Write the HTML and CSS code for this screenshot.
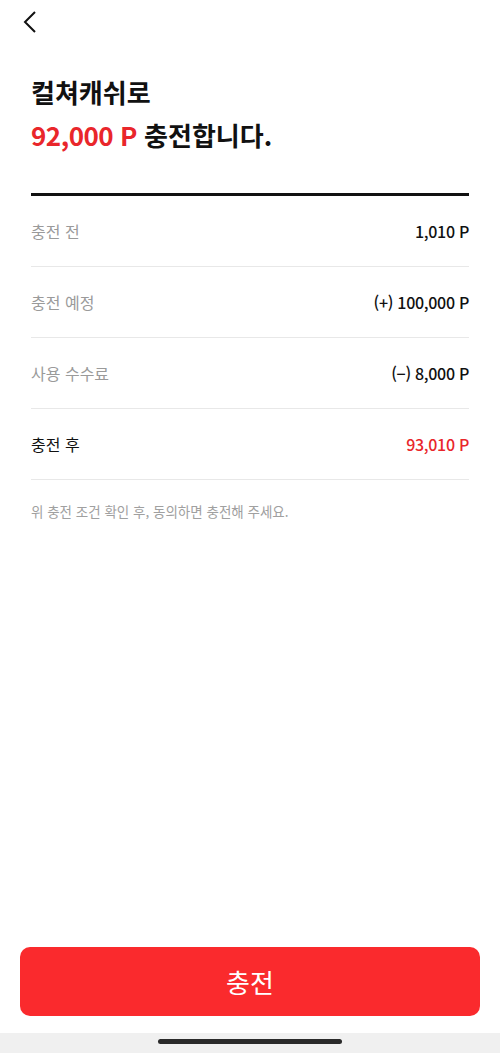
FILE: index.html
```html
<!DOCTYPE html>
<html lang="ko">
<head>
  <meta charset="UTF-8" />
  <title>컬쳐캐쉬 충전</title>
  <link rel="stylesheet" href="styles.css">
</head>
<body>
  <div class="screen">
    <header class="topbar">
      <button class="back" aria-label="뒤로">
        <svg width="16" height="24" viewBox="0 0 16 24">
          <path d="M13 2 L3 12 L13 22" fill="none" stroke="#111" stroke-width="2" />
        </svg>
      </button>
    </header>

    <main class="content">
      <h1 class="title">
        컬쳐캐쉬로<br>
        <span class="point">92,000 P</span> 충전합니다.
      </h1>

      <ul class="summary">
        <li>
          <span class="label">충전 전</span>
          <span class="value">1,010 P</span>
        </li>
        <li>
          <span class="label">충전 예정</span>
          <span class="value">(+) 100,000 P</span>
        </li>
        <li>
          <span class="label">사용 수수료</span>
          <span class="value">(−) 8,000 P</span>
        </li>
        <li class="result">
          <span class="label">충전 후</span>
          <span class="value">93,010 P</span>
        </li>
      </ul>

      <p class="note">위 충전 조건 확인 후, 동의하면 충전해 주세요.</p>
    </main>

    <div class="actions">
      <button class="charge">충전</button>
    </div>

    <div class="home-bar"><span></span></div>
  </div>
</body>
</html>
```

FILE: styles.css
```css
body {
  margin: 0;
  padding: 0;
  background: #fff;
  color: #111;
  font-family: 'Noto Sans CJK KR', 'Noto Sans', sans-serif;
}
.screen {
  height: 1053px;
  display: flex;
  flex-direction: column;
}
.topbar {
  height: 44px;
  padding: 0 0 0 22px;
  display: flex;
  align-items: center;
}
.back {
  background: none;
  border: none;
  padding: 0;
  cursor: pointer;
  display: flex;
}
.content {
  flex: 1;
  padding: 0 31px;
}
.title {
  margin: 26px 0 0;
  font-size: 26px;
  font-weight: bold;
  line-height: 43px;
}
.point {
  color: #e9262b;
  letter-spacing: -0.5px;
}
.summary {
  list-style: none;
  margin: 37px 0 0;
  padding: 0;
  border-top: 3px solid #111;
}
.summary li {
  height: 70px;
  border-bottom: 1px solid #e8e8e8;
  display: flex;
  justify-content: space-between;
  align-items: center;
  font-size: 16px;
}
.summary .label {
  color: #9a9a9a;
}
.summary .value {
  color: #111;
  font-weight: 500;
  letter-spacing: -0.3px;
}
.summary .result .label {
  color: #111;
}
.summary .result .value {
  color: #e9262b;
}
.note {
  margin: 21px 0 0;
  font-size: 13.5px;
  color: #a0a0a0;
}
.actions {
  padding: 0 20px 17px;
}
.charge {
  width: 100%;
  height: 69px;
  border: none;
  border-radius: 10px;
  background: #fa2a2d;
  color: #fff;
  font-family: inherit;
  font-size: 26px;
  cursor: pointer;
}
.home-bar {
  height: 20px;
  background: #f0f0f0;
  display: flex;
  justify-content: center;
  padding-top: 6px;
  box-sizing: border-box;
}
.home-bar span {
  width: 184px;
  height: 5px;
  border-radius: 3px;
  background: #2a2a2a;
}
```
